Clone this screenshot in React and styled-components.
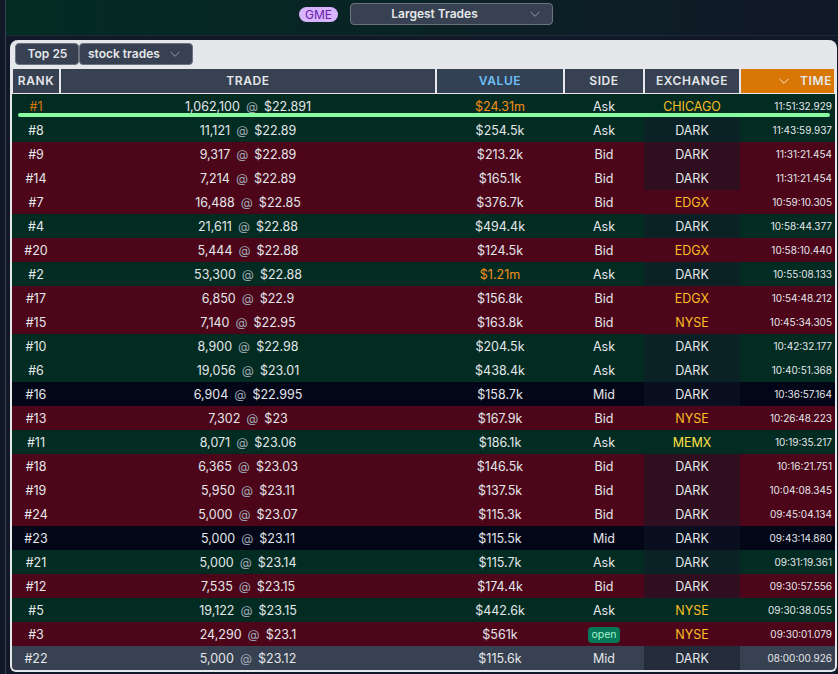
import React from 'react';
import styled, { createGlobalStyle } from 'styled-components';

const Global = createGlobalStyle`
  html, body { margin: 0; padding: 0; background: #111827; }
  body { font-family: Inter, "Liberation Sans", sans-serif; color: #e5e7eb; }
  #root { width: 838px; height: 674px; overflow: hidden; }
`;

const COLS = '48px 376px 128px 80px 96px 95px';

const Frame = styled.div`
  box-sizing: border-box;
  width: 838px;
  height: 674px;
  padding-left: 5px;
  background: #111827;
`;
const Inner = styled.div`
  height: 100%;
  border-left: 1px solid #374151;
  display: flex;
  flex-direction: column;
`;
const TopBar = styled.header`
  box-sizing: border-box;
  height: 36px;
  padding: 3px 0 0 293px;
  display: flex;
  align-items: flex-start;
  gap: 12px;
  background: linear-gradient(to right, #022c22, #111827);
  border-bottom: 1px solid #1f2937;
`;
const Pill = styled.span`
  margin-top: 4px;
  box-sizing: border-box;
  width: 39px;
  height: 15px;
  border-radius: 8px;
  background: #d8b4fe;
  color: #6b21a8;
  font-size: 12px;
  line-height: 15px;
  text-align: center;
`;
const SelectBox = styled.div`
  box-sizing: border-box;
  width: 203px;
  height: 22px;
  position: relative;
  display: flex;
  align-items: center;
  justify-content: center;
  padding: 0 34px 1px 0;
  background: #374151;
  border: 1px solid #6b7280;
  border-radius: 4px;
  font-size: 12px;
  font-weight: 600;
  color: #e5e7eb;
`;
const Chevron = styled.svg`
  width: 14px;
  height: 14px;
  fill: none;
  stroke: ${p => p.$color || '#9ca3af'};
  stroke-width: 1.5;
  stroke-linecap: round;
  stroke-linejoin: round;
  flex: none;
`;
const SelectChevron = styled(Chevron)`
  position: absolute;
  right: 10px;
  top: 3px;
`;
const Panel = styled.section`
  box-sizing: border-box;
  margin: 4px 1px 0 4px;
  height: 632px;
  background: #e5e7eb;
  border: 2px solid #e5e7eb;
  border-top: 0;
  border-radius: 8px 8px 6px 6px;
  display: flex;
  flex-direction: column;
  overflow: hidden;
`;
const Controls = styled.div`
  height: 29px;
  box-sizing: border-box;
  padding: 3px 0 0 3px;
  display: flex;
  align-items: flex-start;
`;
const ToolButton = styled.div`
  box-sizing: border-box;
  height: 22px;
  width: ${p => p.$w}px;
  display: flex;
  align-items: center;
  gap: 8px;
  justify-content: ${p => (p.$center ? 'center' : 'flex-start')};
  padding: ${p => (p.$center ? '0 0 1px 1px' : '0 0 1px 8px')};
  background: #374151;
  border: 1px solid #6b7280;
  border-radius: 4px;
  font-size: 12px;
  font-weight: 600;
  color: #e5e7eb;
`;
const HeadRow = styled.div`
  display: grid;
  grid-template-columns: ${COLS};
  height: 25px;
  background: #e5e7eb;
`;
const HeadCell = styled.div`
  box-sizing: border-box;
  height: 24px;
  margin: 0 1px 1px;
  display: flex;
  align-items: center;
  justify-content: ${p => (p.$sorted ? 'flex-end' : 'center')};
  gap: 9px;
  padding: 0 ${p => (p.$sorted ? '2px' : '0')} 1px 0;
  background: ${p => (p.$sorted ? '#d97706' : p.$active ? '#334155' : '#374151')};
  color: ${p => (p.$active ? '#6cc0f5' : '#e5e7eb')};
  font-size: 12px;
  font-weight: 600;
  letter-spacing: 0.6px;
`;
const ROW = { ask: '#022c22', bid: '#4c0519', mid: '#020617', last: '#374151' };
const Row = styled.div`
  position: relative;
  display: grid;
  grid-template-columns: ${COLS};
  height: 24px;
  align-items: stretch;
  background: ${p => ROW[p.$kind]};
  font-size: 12.5px;
  line-height: 25px;
  color: #e5e7eb;
  text-align: center;
`;
const Cell = styled.div`
  color: ${p => p.$color || 'inherit'};
  white-space: pre;
`;
const At = styled.span`
  color: #9ca3af;
  margin: 0 6px;
`;
const ExchangeCell = styled.div`
  color: ${p => p.$color || '#e5e7eb'};
  background: ${p => (p.$dark ? 'rgba(17,24,39,0.5)' : 'transparent')};
`;
const TimeCell = styled.div`
  font-size: 10px;
  text-align: right;
  padding-right: 3px;
  color: #e5e7eb;
`;
const OpenBadge = styled.span`
  display: inline-block;
  box-sizing: border-box;
  width: 32px;
  height: 16px;
  line-height: 16px;
  border-radius: 4px;
  background: #047857;
  color: #a7f3d0;
  font-size: 10.5px;
  vertical-align: 1px;
`;
const ProgressBar = styled.div`
  position: absolute;
  left: 6px;
  top: 19px;
  width: 812px;
  height: 4px;
  border-radius: 2px;
  background: #86fb9f;
`;

const GOLD = '#fbbf24';
const ORANGE = '#f5901a';
const trades = [
  ['#1', '1,062,100', '$22.891', '$24.31m', 'Ask', 'CHICAGO', '11:51:32.929'],
  ['#8', '11,121', '$22.89', '$254.5k', 'Ask', 'DARK', '11:43:59.937'],
  ['#9', '9,317', '$22.89', '$213.2k', 'Bid', 'DARK', '11:31:21.454'],
  ['#14', '7,214', '$22.89', '$165.1k', 'Bid', 'DARK', '11:31:21.454'],
  ['#7', '16,488', '$22.85', '$376.7k', 'Bid', 'EDGX', '10:59:10.305'],
  ['#4', '21,611', '$22.88', '$494.4k', 'Ask', 'DARK', '10:58:44.377'],
  ['#20', '5,444', '$22.88', '$124.5k', 'Bid', 'EDGX', '10:58:10.440'],
  ['#2', '53,300', '$22.88', '$1.21m', 'Ask', 'DARK', '10:55:08.133'],
  ['#17', '6,850', '$22.9', '$156.8k', 'Bid', 'EDGX', '10:54:48.212'],
  ['#15', '7,140', '$22.95', '$163.8k', 'Bid', 'NYSE', '10:45:34.305'],
  ['#10', '8,900', '$22.98', '$204.5k', 'Ask', 'DARK', '10:42:32.177'],
  ['#6', '19,056', '$23.01', '$438.4k', 'Ask', 'DARK', '10:40:51.368'],
  ['#16', '6,904', '$22.995', '$158.7k', 'Mid', 'DARK', '10:36:57.164'],
  ['#13', '7,302', '$23', '$167.9k', 'Bid', 'NYSE', '10:26:48.223'],
  ['#11', '8,071', '$23.06', '$186.1k', 'Ask', 'MEMX', '10:19:35.217'],
  ['#18', '6,365', '$23.03', '$146.5k', 'Bid', 'DARK', '10:16:21.751'],
  ['#19', '5,950', '$23.11', '$137.5k', 'Bid', 'DARK', '10:04:08.345'],
  ['#24', '5,000', '$23.07', '$115.3k', 'Bid', 'DARK', '09:45:04.134'],
  ['#23', '5,000', '$23.11', '$115.5k', 'Mid', 'DARK', '09:43:14.880'],
  ['#21', '5,000', '$23.14', '$115.7k', 'Ask', 'DARK', '09:31:19.361'],
  ['#12', '7,535', '$23.15', '$174.4k', 'Bid', 'DARK', '09:30:57.556'],
  ['#5', '19,122', '$23.15', '$442.6k', 'Ask', 'NYSE', '09:30:38.055'],
  ['#3', '24,290', '$23.1', '$561k', 'open', 'NYSE', '09:30:01.079'],
  ['#22', '5,000', '$23.12', '$115.6k', 'Mid', 'DARK', '08:00:00.926'],
];

const kindOf = (t, i) => {
  if (i === trades.length - 1) return 'last';
  if (t[4] === 'Ask') return 'ask';
  if (t[4] === 'Mid') return 'mid';
  return 'bid';
};
const exColor = ex => (ex === 'DARK' ? undefined : ex === 'MEMX' ? '#fde047' : GOLD);
const DownPath = () => <path d="M5 9l7 7 7-7" />;

export default function App() {
  return (
    <>
      <Global />
      <Frame>
        <Inner>
          <TopBar>
            <Pill>GME</Pill>
            <SelectBox>
              Largest Trades
              <SelectChevron viewBox="0 0 24 24"><DownPath /></SelectChevron>
            </SelectBox>
          </TopBar>
          <Panel>
            <Controls>
              <ToolButton $w={64} $center>Top 25</ToolButton>
              <ToolButton $w={114}>
                stock trades
                <Chevron viewBox="0 0 24 24"><DownPath /></Chevron>
              </ToolButton>
            </Controls>
            <HeadRow>
              <HeadCell>RANK</HeadCell>
              <HeadCell>TRADE</HeadCell>
              <HeadCell $active>VALUE</HeadCell>
              <HeadCell>SIDE</HeadCell>
              <HeadCell>EXCHANGE</HeadCell>
              <HeadCell $sorted>
                <Chevron $color="#f3f4f6" viewBox="0 0 24 24"><DownPath /></Chevron>
                TIME
              </HeadCell>
            </HeadRow>
            {trades.map((t, i) => {
              const big = t[3].endsWith('m');
              return (
                <Row key={t[0]} $kind={kindOf(t, i)}>
                  <Cell $color={i === 0 ? '#d97706' : undefined}>{t[0]}</Cell>
                  <Cell>{t[1]}<At>@</At>{t[2]}</Cell>
                  <Cell $color={big ? ORANGE : undefined}>{t[3]}</Cell>
                  <Cell>{t[4] === 'open' ? <OpenBadge>open</OpenBadge> : t[4]}</Cell>
                  <ExchangeCell $dark={t[5] === 'DARK'} $color={exColor(t[5])}>{t[5]}</ExchangeCell>
                  <TimeCell>{t[6]}</TimeCell>
                  {i === 0 && <ProgressBar />}
                </Row>
              );
            })}
          </Panel>
        </Inner>
      </Frame>
    </>
  );
}
